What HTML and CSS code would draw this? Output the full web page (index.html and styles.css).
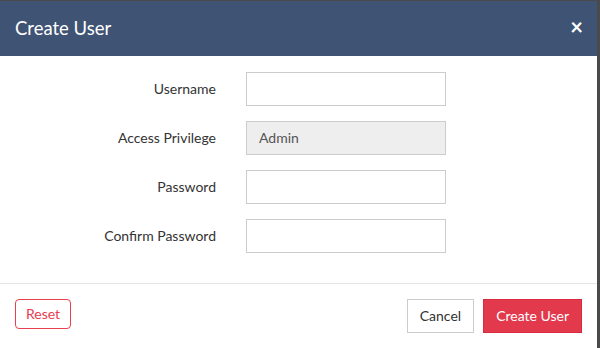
FILE: index.html
```html
<!DOCTYPE html>
<html lang="en">
<head>
    <meta charset="UTF-8">
    <title>Create User</title>
    <link rel="stylesheet" href="styles.css">
</head>
<body>
    <div class="modal">
        <div class="modal-header">
            <h4>Create User</h4>
            <span class="close">&times;</span>
        </div>

        <div class="modal-body">
            <div class="form-row">
                <label>Username</label>
                <input type="text" class="field">
            </div>
            <div class="form-row">
                <label>Access Privilege</label>
                <div class="field readonly">Admin</div>
            </div>
            <div class="form-row">
                <label>Password</label>
                <input type="password" class="field">
            </div>
            <div class="form-row">
                <label>Confirm Password</label>
                <input type="password" class="field">
            </div>
        </div>

        <div class="modal-footer">
            <button class="btn btn-reset">Reset</button>
            <div class="actions">
                <button class="btn btn-default">Cancel</button>
                <button class="btn btn-danger">Create User</button>
            </div>
        </div>
    </div>
</body>
</html>
```

FILE: styles.css
```css
* {
    margin: 0;
    padding: 0;
    box-sizing: border-box;
}

body {
    font-family: Lato, 'Open Sans', sans-serif;
    background: #4a4a4a;
    padding-top: 1px;
    width: 600px;
    height: 348px;
    overflow: hidden;
}

.modal {
    width: 597px;
    background: white;
    min-height: 347px;
}

.modal-header {
    background: #3f5374;
    height: 55px;
    display: flex;
    align-items: center;
    justify-content: space-between;
    padding: 0 15px;
    color: white;
}

.modal-header h4 {
    font-size: 18.5px;
    font-weight: normal;
    padding-bottom: 1px;
}

.close {
    font-size: 22px;
    font-weight: bold;
    line-height: 1;
    margin-right: -1px;
    margin-top: -3px;
}

.modal-body {
    padding: 16px 0 15px;
    border-bottom: 1px solid #e5e5e5;
}

.form-row {
    display: flex;
    align-items: center;
    gap: 30px;
    margin-bottom: 15px;
}

.form-row label {
    width: 216px;
    text-align: right;
    font-size: 14px;
    color: #333;
    padding-bottom: 2px;
}

.field {
    width: 200px;
    height: 34px;
    border: 1px solid #ccc;
    background: white;
    font-family: inherit;
    font-size: 14px;
    padding: 0 12px;
    outline: none;
}

.field.readonly {
    background: #eee;
    color: #555;
    display: flex;
    align-items: center;
    padding-bottom: 1px;
}

.modal-footer {
    display: flex;
    justify-content: space-between;
    padding: 15px 15px 15px;
}

.actions {
    display: flex;
    gap: 9px;
}

.btn {
    font-family: inherit;
    font-size: 14px;
    height: 34px;
    padding: 0 12px 1px;
    border: 1px solid #ccc;
    background: white;
    color: #333;
    cursor: pointer;
}

.btn-reset {
    height: 30px;
    padding: 0 10px 1px;
    border: 1px solid #e8404f;
    border-radius: 4px;
    color: #e8404f;
}

.btn-danger {
    background: #e3394d;
    border-color: #d92a3f;
    color: white;
}
```
